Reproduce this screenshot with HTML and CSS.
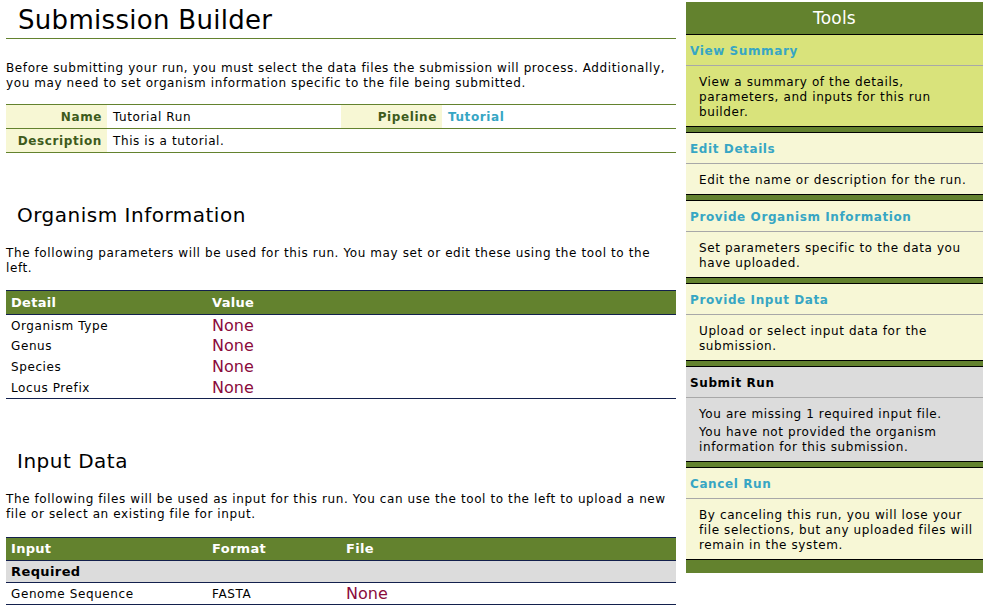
FILE: index.html
```html
<!DOCTYPE html>
<html>
<head>
<meta charset="utf-8">
<title>Submission Builder</title>
<link rel="stylesheet" href="styles.css">
</head>
<body>
<div class="page">
  <main class="main">
    <h1 class="title">Submission Builder</h1>
    <p class="intro">Before submitting your run, you must select the data files the submission will process. Additionally, you may need to set organism information specific to the file being submitted.</p>
    <table class="info">
      <colgroup><col class="lab"><col class="val"><col class="lab"><col class="val"></colgroup>
      <tr><th>Name</th><td>Tutorial Run</td><th>Pipeline</th><td class="link">Tutorial</td></tr>
      <tr><th>Description</th><td colspan="3">This is a tutorial.</td></tr>
    </table>

    <h2 class="section">Organism Information</h2>
    <p class="desc">The following parameters will be used for this run. You may set or edit these using the tool to the left.</p>
    <table class="data org">
      <colgroup><col class="c1"><col></colgroup>
      <thead><tr><th>Detail</th><th>Value</th></tr></thead>
      <tbody>
        <tr><td>Organism Type</td><td class="none">None</td></tr>
        <tr><td>Genus</td><td class="none">None</td></tr>
        <tr><td>Species</td><td class="none">None</td></tr>
        <tr class="last"><td>Locus Prefix</td><td class="none">None</td></tr>
      </tbody>
    </table>

    <h2 class="section">Input Data</h2>
    <p class="desc">The following files will be used as input for this run. You can use the tool to the left to upload a new file or select an existing file for input.</p>
    <table class="data inp">
      <colgroup><col class="c1"><col class="c2"><col></colgroup>
      <thead><tr><th>Input</th><th>Format</th><th>File</th></tr></thead>
      <tbody>
        <tr class="group"><td colspan="3">Required</td></tr>
        <tr class="last"><td>Genome Sequence</td><td>FASTA</td><td class="none">None</td></tr>
      </tbody>
    </table>
  </main>

  <aside class="tools">
    <div class="tools-head">Tools</div>
    <div class="tool active">
      <div class="tool-title">View Summary</div>
      <div class="tool-body"><p>View a summary of the details, parameters, and inputs for this run builder.</p></div>
    </div>
    <div class="tool">
      <div class="tool-title">Edit Details</div>
      <div class="tool-body"><p>Edit the name or description for the run.</p></div>
    </div>
    <div class="tool">
      <div class="tool-title">Provide Organism Information</div>
      <div class="tool-body"><p>Set parameters specific to the data you have uploaded.</p></div>
    </div>
    <div class="tool">
      <div class="tool-title">Provide Input Data</div>
      <div class="tool-body"><p>Upload or select input data for the submission.</p></div>
    </div>
    <div class="tool disabled">
      <div class="tool-title">Submit Run</div>
      <div class="tool-body"><p>You are missing 1 required input file.</p><p>You have not provided the organism information for this submission.</p></div>
    </div>
    <div class="tool">
      <div class="tool-title">Cancel Run</div>
      <div class="tool-body"><p>By canceling this run, you will lose your file selections, but any uploaded files will remain in the system.</p></div>
    </div>
  </aside>
</div>
</body>
</html>
```

FILE: styles.css
```css
body {
  margin: 0;
  font-family: "DejaVu Sans", Verdana, sans-serif;
  font-size: 12px;
  letter-spacing: 0.6px;
  line-height: 15px;
  color: #000;
  background: #fff;
}

.page {
  display: flex;
  align-items: flex-start;
  padding-left: 6px;
}

.main {
  width: 670px;
}

.title {
  margin: 0;
  height: 38px;
  line-height: 40px;
  font-size: 26px;
  font-weight: normal;
  letter-spacing: 0.3px;
  padding-left: 12px;
  border-bottom: 1px solid #63822e;
}

.intro {
  margin: 22px 0 0;
}

table {
  width: 100%;
  border-collapse: separate;
  border-spacing: 0;
  table-layout: fixed;
}

.info {
  margin-top: 13px;
  border-top: 1px solid #63822e;
}

.info col.lab { width: 101px; }
.info col.val { width: 234px; }

.info th,
.info td {
  padding: 1px 0 0;
  line-height: 22px;
  border-bottom: 1px solid #63822e;
  white-space: nowrap;
}

.info th {
  text-align: right;
  padding-right: 5px;
  background: #f7f7d4;
  color: #3e5b1c;
  font-weight: bold;
}

.info td {
  padding-left: 6px;
}

.link {
  color: #37a6c4;
  font-weight: bold;
}

.section {
  margin: 50px 0 0;
  font-size: 20px;
  font-weight: normal;
  letter-spacing: 0.5px;
  line-height: 24px;
  padding-left: 11px;
}

.desc {
  margin: 19px 0 0;
}

.data {
  border-top: 1px solid #13204d;
}

.data col.c1 { width: 201px; }
.data col.c2 { width: 134px; }

.data th {
  background: #63822e;
  color: #fff;
  font-weight: bold;
  font-size: 13px;
  letter-spacing: 0.3px;
  text-align: left;
  padding: 0 0 0 5px;
  border-bottom: 1px solid #13204d;
  line-height: 23px;
}

.data td {
  padding: 2px 0 0 5px;
  line-height: 18.75px;
}

.data tr.last td {
  border-bottom: 1px solid #13204d;
}

.org {
  margin-top: 13.5px;
}

.inp {
  margin-top: 15px;
}

.inp th {
  line-height: 22px;
}

.inp td {
  padding-top: 1px;
  line-height: 20px;
}

.data tr.group td {
  background: #dcdcdc;
  font-weight: bold;
  font-size: 13px;
  letter-spacing: 0.4px;
  border-bottom: 1px solid #13204d;
}

.none {
  color: #8a0b3c;
  font-size: 16px;
  letter-spacing: 0;
}

/* Sidebar */
.tools {
  width: 297px;
  margin-left: 10px;
  margin-top: 2px;
  background: #63822e;
  padding-bottom: 13px;
}

.tools-head {
  height: 32px;
  line-height: 32px;
  text-align: center;
  color: #fff;
  font-size: 17px;
  letter-spacing: 0.2px;
}

.tool {
  background: #f7f7d6;
  border-top: 1px solid #000;
  border-bottom: 1px solid #000;
  margin-bottom: 5px;
}

.tool:last-child {
  margin-bottom: 0;
}

.tool.active {
  background: #d9e37b;
}

.tool.disabled {
  background: #dcdcdc;
}

.tool-title {
  height: 30px;
  line-height: 33px;
  padding-left: 4px;
  font-weight: bold;
  color: #37a6c4;
  border-bottom: 1px solid #a8a8a8;
  overflow: hidden;
}

.tool.disabled .tool-title {
  color: #000;
}

.tool-body {
  padding: 9px 10px 6px 13px;
}

.tool-body p {
  margin: 0;
}

.tool-body p + p {
  margin-top: 3px;
}
```
